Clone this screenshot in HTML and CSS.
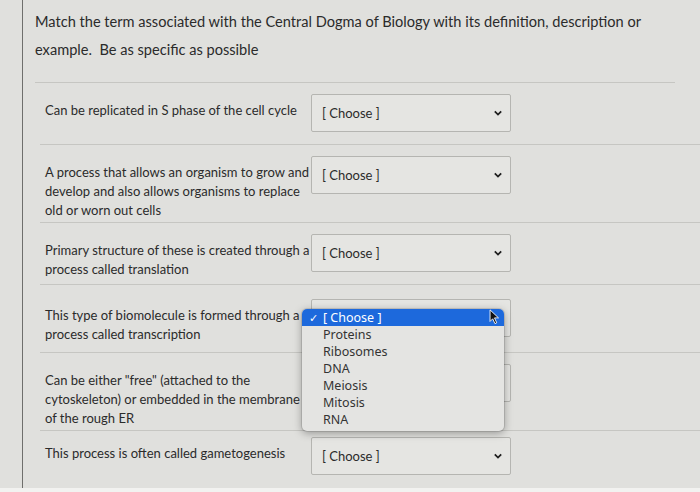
FILE: index.html
```html
<!DOCTYPE html>
<html lang="en">
<head>
  <meta charset="UTF-8" />
  <title>Quiz Question</title>
  <link rel="stylesheet" href="styles.css">
</head>
<body>
  <div class="panel">
    <p class="question">Match the term associated with the Central Dogma of Biology with its definition, description or example.&nbsp; Be as specific as possible</p>

    <div class="answers">
      <div class="row">
        <div class="label">Can be replicated in S phase of the cell cycle</div>
        <div class="select"><span>[ Choose ]</span><svg class="chev" viewBox="0 0 10 6"><path d="M1 1 L5 5 L9 1" /></svg></div>
      </div>

      <div class="row">
        <div class="label">A process that allows an organism to grow and develop and also allows organisms to replace old or worn out cells</div>
        <div class="select"><span>[ Choose ]</span><svg class="chev" viewBox="0 0 10 6"><path d="M1 1 L5 5 L9 1" /></svg></div>
      </div>

      <div class="row">
        <div class="label">Primary structure of these is created through a process called translation</div>
        <div class="select"><span>[ Choose ]</span><svg class="chev" viewBox="0 0 10 6"><path d="M1 1 L5 5 L9 1" /></svg></div>
      </div>

      <div class="row row-open">
        <div class="label">This type of biomolecule is formed through a process called transcription</div>
        <div class="select open">
          <span>[ Choose ]</span><svg class="chev" viewBox="0 0 10 6"><path d="M1 1 L5 5 L9 1" /></svg>
          <ul class="menu">
            <li class="picked">[ Choose ]</li>
            <li>Proteins</li>
            <li>Ribosomes</li>
            <li>DNA</li>
            <li>Meiosis</li>
            <li>Mitosis</li>
            <li>RNA</li>
          </ul>
          <svg class="cursor" viewBox="0 0 12 18"><path d="M1 1 L1 14 L4 11 L6.5 16.5 L8.5 15.5 L6 10 L10.5 10 Z" /></svg>
        </div>
      </div>

      <div class="row">
        <div class="label">Can be either "free" (attached to the cytoskeleton) or embedded in the membrane of the rough ER</div>
        <div class="select"><span>[ Choose ]</span><svg class="chev" viewBox="0 0 10 6"><path d="M1 1 L5 5 L9 1" /></svg></div>
      </div>

      <div class="row row-last">
        <div class="label">This process is often called gametogenesis</div>
        <div class="select"><span>[ Choose ]</span><svg class="chev" viewBox="0 0 10 6"><path d="M1 1 L5 5 L9 1" /></svg></div>
      </div>
    </div>
  </div>
  <div class="bottom"></div>
</body>
</html>
```

FILE: styles.css
```css
html, body {
  margin: 0;
  height: 100%;
}
body {
  font-family: Lato, "Liberation Sans", sans-serif;
  background-color: #e0e0dd;
  color: #2b2b2b;
  overflow: hidden;
}
.panel {
  margin-left: 22px;
  border-left: 1px solid #6f6f6c;
  padding-left: 12px;
  height: 488px;
  box-sizing: border-box;
}
.question {
  margin: 0;
  padding-top: 8px;
  padding-bottom: 18px;
  font-size: 14.6px;
  line-height: 28px;
  width: 640px;
  border-bottom: 1px solid #c6c6c2;
}
.answers { margin-left: 5px; }
.row {
  display: flex;
  align-items: flex-start;
  padding: 11px 0 0 5px;
  border-bottom: 1px solid #c6c6c2;
}
.row:last-child { border-bottom: none; }
.label {
  width: 266px;
  font-size: 13px;
  line-height: 19px;
  padding: 7px 0 2px;
}
.select {
  position: relative;
  display: flex;
  align-items: center;
  width: 200px;
  height: 38px;
  margin-bottom: 12px;
  box-sizing: border-box;
  border: 1px solid #b5b5b1;
  border-radius: 2px;
  background-color: #e5e5e2;
  padding: 0 8px 0 10px;
  font-size: 13px;
}
.select span { flex: 1; }
.chev {
  width: 8px;
  height: 6px;
  fill: none;
  stroke: #1e1e1e;
  stroke-width: 2.2;
}
.row-open { padding-top: 14px; padding-bottom: 3px; }
.row-last { padding-top: 6px; }

/* native-looking option list opened over the field */
.menu {
  position: absolute;
  left: -10px;
  top: 9px;
  width: 202px;
  margin: 0;
  padding: 0 0 3px;
  list-style: none;
  background-color: #e4e4e2;
  border-radius: 5px;
  box-shadow: 0 2px 8px rgba(0, 0, 0, 0.35), 0 0 0 1px rgba(0, 0, 0, 0.1);
  font-family: "Noto Sans", Roboto, sans-serif;
  font-size: 12.5px;
  line-height: 17px;
  color: #333;
  z-index: 2;
}
.menu li { padding-left: 21px; }
.menu li.picked {
  position: relative;
  background-color: #1d69dc;
  color: #fff;
  border-radius: 5px 5px 0 0;
}
.menu li.picked::before {
  content: "\2713";
  position: absolute;
  left: 7px;
  font-size: 11px;
}
.cursor {
  position: absolute;
  right: 10px;
  top: 9px;
  width: 11px;
  height: 16px;
  fill: #111;
  stroke: #fff;
  stroke-width: 1;
  z-index: 3;
}
.bottom {
  height: 4px;
  background-color: #f2f2f0;
}
```
